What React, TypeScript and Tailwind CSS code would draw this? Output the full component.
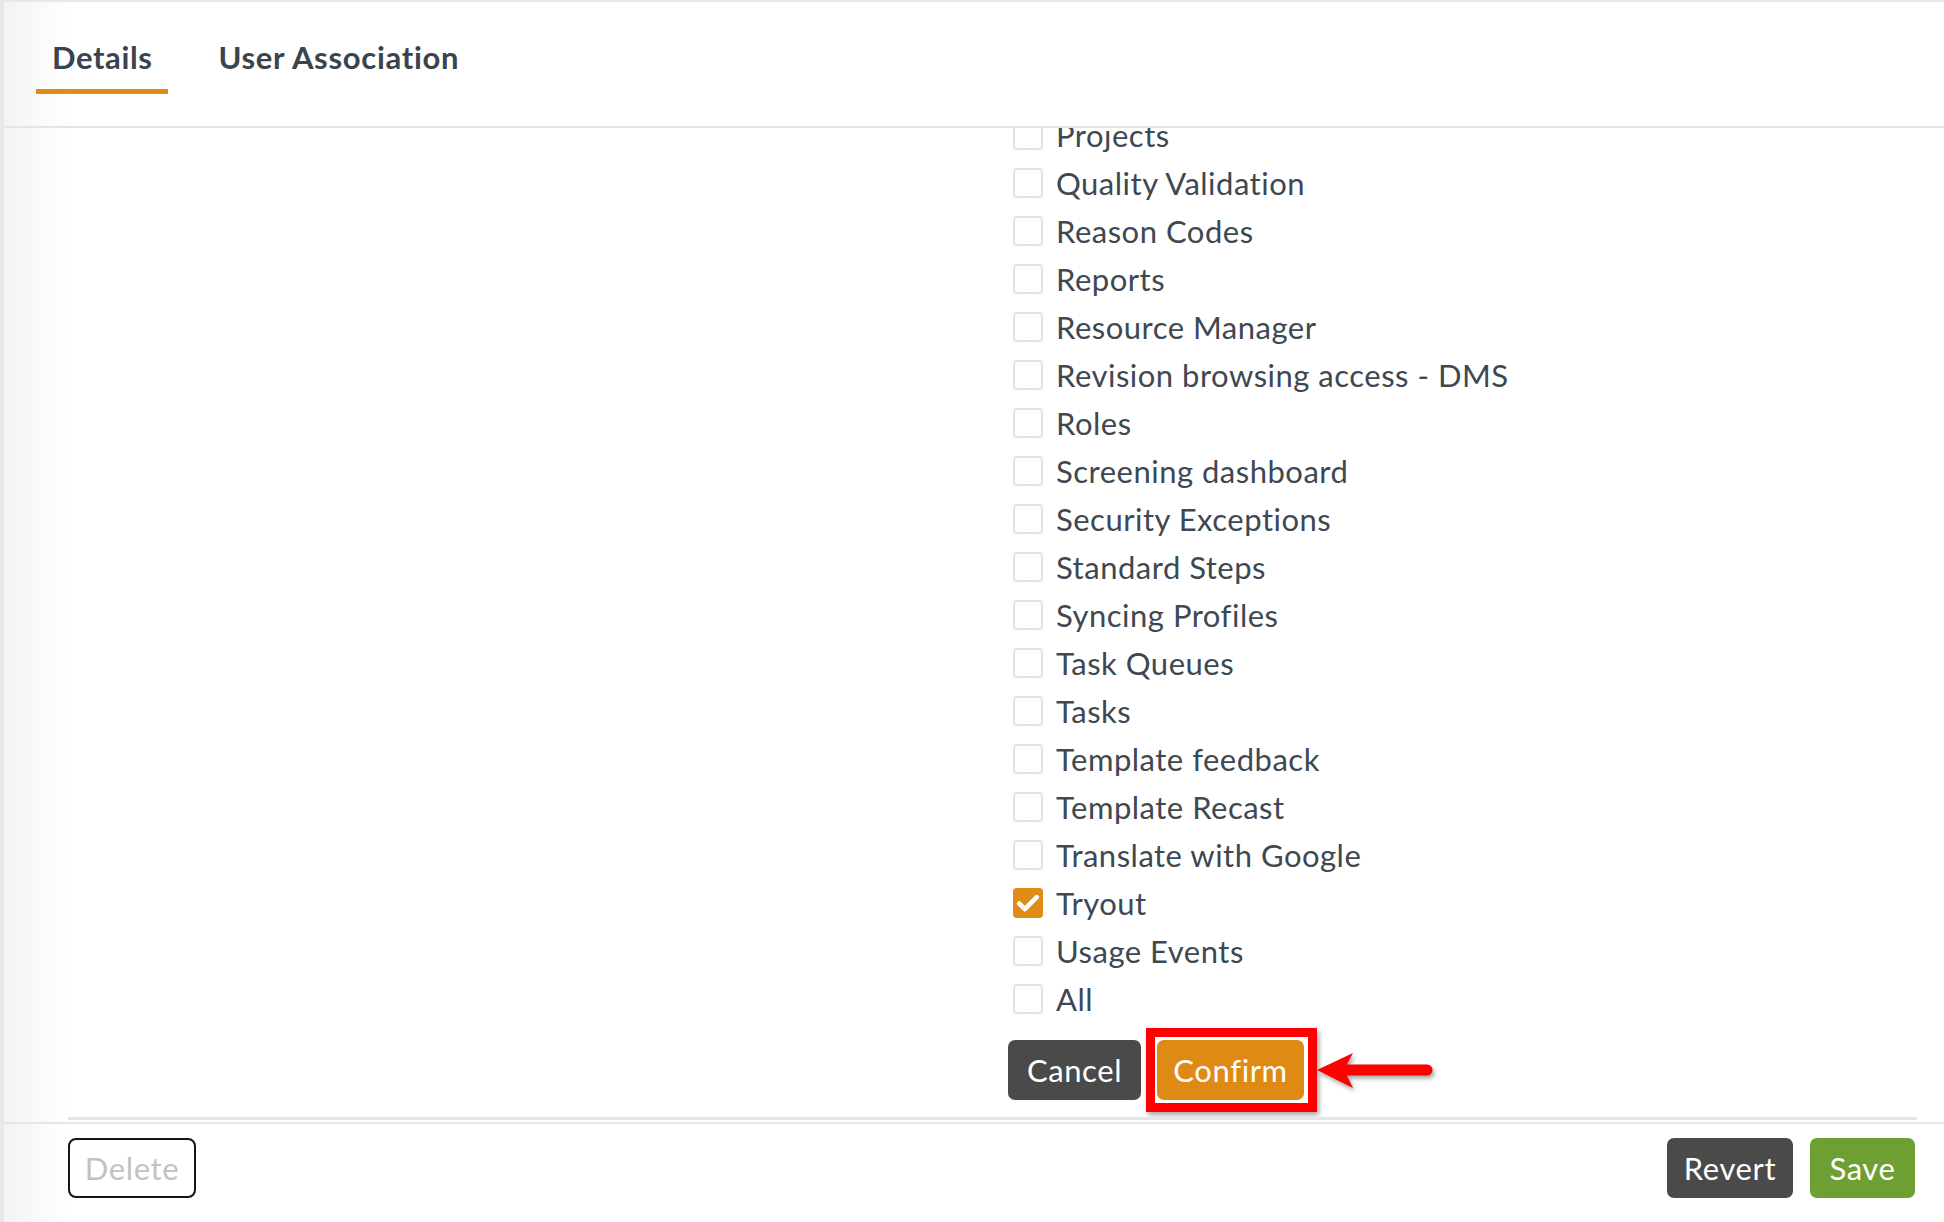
import React from "react";

const items: { label: string; checked?: boolean }[] = [
  { label: "Projects" },
  { label: "Quality Validation" },
  { label: "Reason Codes" },
  { label: "Reports" },
  { label: "Resource Manager" },
  { label: "Revision browsing access - DMS" },
  { label: "Roles" },
  { label: "Screening dashboard" },
  { label: "Security Exceptions" },
  { label: "Standard Steps" },
  { label: "Syncing Profiles" },
  { label: "Task Queues" },
  { label: "Tasks" },
  { label: "Template feedback" },
  { label: "Template Recast" },
  { label: "Translate with Google" },
  { label: "Tryout", checked: true },
  { label: "Usage Events" },
  { label: "All" },
];

function Checkbox({ checked }: { checked?: boolean }) {
  if (checked) {
    return (
      <div className="w-[30px] h-[30px] rounded-[4px] bg-[#e08b14] flex items-center justify-center shrink-0">
        <svg width="28" height="28" viewBox="0 0 24 24" fill="none">
          <path d="M4.5 12.5l4.8 4.8L19.5 7" stroke="white" strokeWidth="4" strokeLinecap="round" strokeLinejoin="round" />
        </svg>
      </div>
    );
  }
  return <div className="w-[30px] h-[30px] rounded-[4px] border-2 border-[#e3e3e3] bg-white shrink-0" />;
}

export default function App() {
  return (
    <div
      className="w-[1944px] h-[1222px] flex flex-col overflow-hidden border-t-2 border-l-4 border-[#e8e8e8] bg-[linear-gradient(to_right,#f3f3f3,#ffffff_64px)] text-[#3d4852]"
      style={{ fontFamily: "Lato, 'Open Sans', sans-serif" }}
    >
      {/* Header tabs */}
      <div className="h-[126px] shrink-0 border-b-2 border-[#e4e4e4] flex pl-[32px] gap-[34px]">
        <div className="pt-[37px] pb-[14px] px-[16px] border-b-[5px] border-[#e08b14] h-[92px] box-border">
          <div className="text-[31px] leading-[36px] font-bold tracking-[0.6px] text-[#3b444d]">Details</div>
        </div>
        <div className="pt-[37px] pb-[14px] px-[16px] h-[92px] box-border">
          <div className="text-[31px] leading-[36px] font-bold tracking-[0.7px] text-[#3b444d]">User Association</div>
        </div>
      </div>

      {/* Content */}
      <div className="h-[994px] shrink-0 overflow-hidden">
        <div className="ml-[64px] mr-[27px] border-b-[3px] border-[#e6e6e6] h-[992px] box-border overflow-hidden">
          <div className="-mt-[17px] pl-[940px]">
            <div className="flex flex-col">
              {items.map((it) => (
                <div key={it.label} className="h-[48px] flex items-center gap-[13px] pl-[5px]">
                  <Checkbox checked={it.checked} />
                  <span className="text-[31px] leading-none tracking-[0.5px] text-[#3d4852] whitespace-nowrap">{it.label}</span>
                </div>
              ))}
            </div>
            <div className="mt-[17px] flex items-center gap-[16px]">
              <button className="h-[60px] w-[133px] rounded-[7px] bg-[#4a4a4a] text-white text-[31px] tracking-[0.6px]">Cancel</button>
              <div className="relative">
                <button className="h-[60px] w-[147px] rounded-[7px] bg-[#df8a14] text-white text-[31px] tracking-[0.6px]">Confirm</button>
                <div className="absolute -left-[11px] -right-[13px] -top-[12px] -bottom-[12px] border-[9px] border-[#ff0000] shadow-[2px_3px_5px_rgba(0,0,0,0.35)] pointer-events-none" />
                <svg
                  className="absolute left-[160px] top-[8px]"
                  width="124"
                  height="46"
                  viewBox="0 0 124 46"
                  style={{ filter: "drop-shadow(2px 3px 2px rgba(0,0,0,0.35))" }}
                >
                  <path d="M0 22 L36 5 L27 22 L36 40 Z" fill="#ff0000" />
                  <line x1="26" y1="22" x2="110" y2="22" stroke="#ff0000" strokeWidth="11" strokeLinecap="round" />
                </svg>
              </div>
            </div>
          </div>
        </div>
      </div>

      {/* Footer */}
      <div className="flex-1 border-t-2 border-[#e6e6e6] flex items-start justify-between pl-[64px] pr-[29px] pt-[14px]">
        <button className="h-[60px] w-[128px] rounded-[8px] border-2 border-[#161616] bg-white text-[#c2c2c2] text-[31px] tracking-[0.6px]">Delete</button>
        <div className="flex gap-[17px]">
          <button className="h-[60px] w-[126px] rounded-[7px] bg-[#4a4a4a] text-white text-[31px] tracking-[0.6px]">Revert</button>
          <button className="h-[60px] w-[105px] rounded-[7px] bg-[#6e9f33] text-white text-[31px] tracking-[0.6px]">Save</button>
        </div>
      </div>
    </div>
  );
}
